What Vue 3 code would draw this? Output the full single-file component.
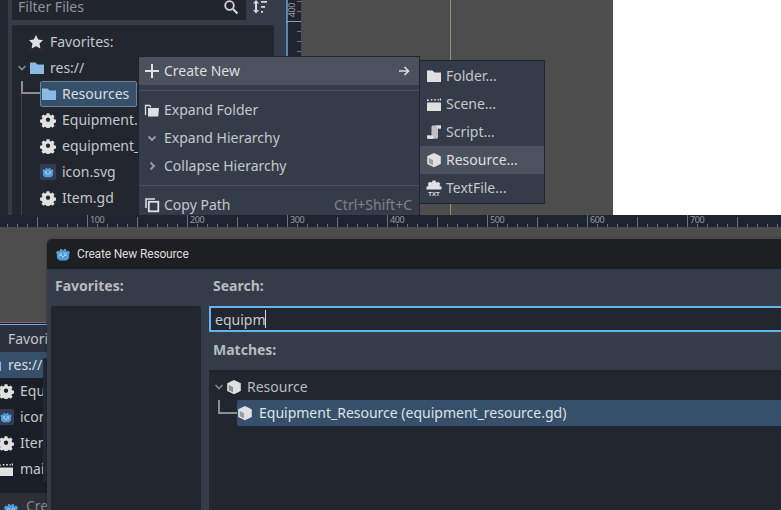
<script setup>
const ticks = []
for (let x = 7; x < 781; x += 10) {
  const step = Math.round((x - 87) / 10)
  const kind = step % 10 === 0 ? 'major' : step % 5 === 0 ? 'mid' : 'minor'
  ticks.push({ x, kind, label: step % 10 === 0 && x >= 87 && x < 760 ? String(x - 87 + 100) : '' })
}

const sideTicks = [1, 11, 31, 41, 51]

const tree = [
  { icon: 'gear', name: 'Equipment.gd' },
  { icon: 'gear', name: 'equipment_resource.gd' },
  { icon: 'godot', name: 'icon.svg' },
  { icon: 'gear', name: 'Item.gd' },
]

const backTree = [
  { icon: 'gear', name: 'Equipment.gd' },
  { icon: 'godot', name: 'icon.svg' },
  { icon: 'gear', name: 'Item.gd' },
  { icon: 'clap', name: 'main.tscn' },
]

const submenu = [
  { icon: 'folder', label: 'Folder...' },
  { icon: 'clap', label: 'Scene...' },
  { icon: 'scroll', label: 'Script...' },
  { icon: 'cube', label: 'Resource...', active: true },
  { icon: 'textfile', label: 'TextFile...' },
]
</script>

<template>
  <div class="page">
    <svg width="0" height="0" class="defs">
      <defs>
        <symbol id="folder" viewBox="0 0 16 16"><path d="M1 2.500h5.500L8.500 4.500H15v9.500H1z" fill="currentColor" /></symbol>
        <symbol id="gear" viewBox="0 0 16 16">
          <path fill="currentColor" fill-rule="evenodd" d="M6.500 1h3l.4 2 1.300.6 1.700-1.100 2.100 2.100-1.100 1.700.6 1.300 2 .4v3l-2 .4-.6 1.300 1.100 1.700-2.100 2.100-1.700-1.100-1.300.6-.4 2h-3l-.4-2-1.300-.6-1.700 1.100-2.100-2.100 1.100-1.700-.6-1.300-2-.4v-3l2-.4.6-1.300-1.100-1.700 2.100-2.100 1.700 1.100 1.300-.6zM8 5.700a2.300 2.300 0 1 0 0 4.600 2.300 2.300 0 0 0 0-4.600z" transform="translate(.5 .2) scale(.94)" />
        </symbol>
        <symbol id="head" viewBox="0 0 16 16">
          <path fill="#4f9ed8" d="M1 6.500 2.800 4.500l1.700.9L5.300 3h1.500l.6 1.200h1.200L9.200 3h1.500l.8 2.400 1.700-.9L15 6.500l-.9 1.700v4L11.500 14.500h-7L1.900 12.200V8.200z" />
          <path fill="#e6eef5" d="M4.500 7.500h2.200v2.200H4.500zM9.300 7.500h2.200v2.200H9.300zM7.300 10.300h1.400v1.300H7.300z" />
          <path fill="#25303f" d="M5.300 8.200h.9v.9h-.9zM9.900 8.200h.9v.9h-.9z" />
        </symbol>
        <symbol id="godot" viewBox="0 0 16 16">
          <rect width="16" height="16" rx="2" fill="#333c56" />
          <use href="#head" x="1.500" y="1.500" width="13" height="13" />
        </symbol>
        <symbol id="cube" viewBox="0 0 16 16">
          <path fill="currentColor" fill-rule="evenodd" d="M8 1 14.800 4.200v7.800L8 15.200 1.200 12V4.200zM2.900 6.300v4.700l4 1.900V8.200z" />
          <path fill="currentColor" opacity=".55" d="M2.900 6.300v4.700l4 1.900V8.200z" />
        </symbol>
        <symbol id="clap" viewBox="0 0 16 16">
          <path fill="currentColor" d="M1 6.500h14V15H1zM1 3.500h1.800v1.500H1zM4.800 3h1.600v1.500H4.800zM8.200 3h1.600v1.500H8.200zM11.600 3h1.200v1.500h-1.200zM13.800 2.500H15v2h-1.200z" />
        </symbol>
        <symbol id="scroll" viewBox="0 0 16 16">
          <path fill="currentColor" opacity=".8" d="M6.800 1.500H15v3h-3V13c0 1-.7 1.800-1.700 1.800H2.500C1.500 14.800 1 14 1 13v-1.500h4.500V3c0-1 .5-1.500 1.300-1.500z" />
          <path fill="currentColor" d="M8.800 1.500H15v3h-3.500V4c0-1-1-2.500-2.700-2.500zM1 11.500h6.500V13c0 1-.5 1.800-1.500 1.800H2.500C1.500 14.800 1 14 1 13z" />
        </symbol>
        <symbol id="textfile" viewBox="0 0 16 16">
          <path fill="currentColor" d="M6.500 .5h3l.3 1.500 1.200.5 1.300-.8 2 2-.8 1.300.4 1.200 1.600.3v3H.5V6.500l1.600-.3.4-1.200-.8-1.300 2-2 1.300.8 1.200-.5z" />
          <text x="8" y="15.500" text-anchor="middle" font-size="6" font-weight="700" font-family="Liberation Sans, sans-serif" fill="currentColor">TXT</text>
        </symbol>
      </defs>
    </svg>

    <div class="editor-top">
      <div class="edge"></div>
      <div class="dock">
        <div class="filter-row">
          <div class="filter-input">
            <span>Filter Files</span>
            <svg class="search" viewBox="0 0 16 16"><circle cx="6.500" cy="6.500" r="4.300" fill="none" stroke="currentColor" stroke-width="1.800" /><path d="m10 10 4.500 4.500" stroke="currentColor" stroke-width="2.200" /></svg>
          </div>
          <svg class="sort" viewBox="0 0 16 16"><path d="M4 1 1 4.500h2V11H1l3 3.500L7 11H5V4.500h2z" fill="currentColor" /><path d="M9 2h6v1.800H9zM9 7h4v1.800H9zM9 12h2v1.800H9z" fill="currentColor" /></svg>
        </div>
        <div class="file-tree">
          <div class="tree-row fav"><svg class="ico star" viewBox="0 0 16 16"><path d="m8 1 2.200 4.500 4.800.7-3.500 3.400.9 4.900L8 12.200l-4.400 2.300.9-4.900L1 6.200l4.800-.7z" fill="currentColor" /></svg>Favorites:</div>
          <div class="tree-row res">
            <svg class="chev" viewBox="0 0 10 10"><path d="m1.500 3 3.500 3.500L8.500 3" fill="none" stroke="currentColor" stroke-width="1.600" /></svg>
            <svg class="ico blue"><use href="#folder" /></svg>res://
          </div>
          <div class="tree-row child selected">
            <svg class="ico blue"><use href="#folder" /></svg>Resources
          </div>
          <div v-for="f in tree" :key="f.name" class="tree-row child">
            <svg class="ico"><use :href="'#' + f.icon" /></svg>{{ f.name }}
          </div>
          <i class="guide-v"></i>
          <i class="guide-h"></i>
        </div>
      </div>
      <div class="vruler">
        <span class="vlabel">400</span>
        <i class="vtick major"></i>
        <i v-for="y in sideTicks" :key="y" class="vtick" :style="{ top: y + 'px' }"></i>
      </div>
      <div class="viewport"><i class="axis"></i></div>
      <div class="white"></div>
    </div>

    <div class="hruler">
      <template v-for="t in ticks" :key="t.x">
        <i class="tick" :class="t.kind" :style="{ left: t.x + 'px' }"></i>
        <span v-if="t.label" class="tick-label" :style="{ left: t.x + 3 + 'px' }">{{ t.label }}</span>
      </template>
    </div>

    <div class="editor-bottom">
      <div class="back-dock">
        <div class="back-fav">Favorites:</div>
        <div class="back-res"><svg class="ico blue"><use href="#folder" /></svg>res://</div>
        <div v-for="f in backTree" :key="f.name" class="back-row">
          <svg class="ico"><use :href="'#' + f.icon" /></svg><span>{{ f.name }}</span>
        </div>
        <div class="back-title"><svg class="ico"><use href="#head" /></svg>Create</div>
        <i class="back-strip"></i>
      </div>
    </div>

    <div class="menu">
      <div class="menu-item hot">
        <svg class="ico"><path d="M8 1v14M1 8h14" stroke="currentColor" stroke-width="2" /></svg>Create New
        <svg class="arrow" viewBox="0 0 12 12"><path d="M1 6h9M6.500 2 10.500 6l-4 4" fill="none" stroke="currentColor" stroke-width="1.700" /></svg>
      </div>
      <div class="sep"></div>
      <div class="menu-item"><svg class="ico" viewBox="0 0 16 16"><path d="M1.500 13V3.500h4L7 5" fill="none" stroke="currentColor" stroke-width="1.300" /><path d="M4 6h11l-.8 8.500H4z" fill="currentColor" /></svg>Expand Folder</div>
      <div class="menu-item"><svg class="ico dim" viewBox="0 0 16 16"><path d="m4.500 6.500 3.500 3.500 3.500-3.500" fill="none" stroke="currentColor" stroke-width="1.800" /></svg>Expand Hierarchy</div>
      <div class="menu-item"><svg class="ico dim" viewBox="0 0 16 16"><path d="m6.500 4.500 3.500 3.500-3.500 3.500" fill="none" stroke="currentColor" stroke-width="1.800" /></svg>Collapse Hierarchy</div>
      <div class="sep"></div>
      <div class="menu-item"><svg class="ico" viewBox="0 0 16 16"><path d="M2 11V2h9" fill="none" stroke="currentColor" stroke-width="1.500" /><rect x="4.800" y="4.800" width="9.500" height="9.500" fill="none" stroke="currentColor" stroke-width="1.800" /></svg>Copy Path<span class="shortcut">Ctrl+Shift+C</span></div>
    </div>

    <div class="submenu">
      <div v-for="s in submenu" :key="s.label" class="menu-item" :class="{ hot: s.active }">
        <svg class="ico"><use :href="'#' + s.icon" /></svg>{{ s.label }}
      </div>
    </div>

    <div class="dialog">
      <div class="titlebar"><svg class="ico"><use href="#head" /></svg>Create New Resource</div>
      <div class="dialog-body">
        <div class="col-fav">
          <div class="label">Favorites:</div>
          <div class="fav-list"></div>
        </div>
        <div class="col-main">
          <div class="label">Search:</div>
          <div class="search-input">equipm<i class="caret"></i></div>
          <div class="label matches">Matches:</div>
          <div class="match-tree">
            <div class="match-row">
              <svg class="chev" viewBox="0 0 10 10"><path d="m1.500 3 3.500 3.500L8.500 3" fill="none" stroke="currentColor" stroke-width="1.600" /></svg>
              <svg class="ico"><use href="#cube" /></svg>Resource
            </div>
            <div class="match-row picked"><svg class="ico"><use href="#cube" /></svg>Equipment_Resource (equipment_resource.gd)</div>
            <i class="match-guide"></i>
          </div>
        </div>
      </div>
    </div>
  </div>
</template>

<style>
html, body { margin: 0; background: #4d4d4d; }
</style>

<style scoped>
.page {
  position: relative;
  width: 781px;
  height: 510px;
  overflow: hidden;
  display: flex;
  flex-direction: column;
  font-family: "Noto Sans", sans-serif;
  font-size: 14px;
  color: #c4c7cb;
}
.defs { position: absolute; }
.ico { width: 16px; height: 16px; flex: none; color: #e0e0e0; }
.blue { color: #8ab9e3; }
.dim { color: #9b9ea3; }

.editor-top { height: 215px; display: flex; flex: none; background: #353c49; }
.edge { width: 8px; flex: none; background: #21262f; }
.dock { width: 278px; flex: none; padding: 0 12px 0 4px; box-sizing: border-box; display: flex; flex-direction: column; gap: 5px; }
.filter-row { height: 20px; display: flex; align-items: center; }
.filter-input {
  width: 234px;
  height: 20px;
  background: #20252e;
  padding: 0 7px 0 6px;
  box-sizing: border-box;
  display: flex;
  align-items: flex-end;
  justify-content: space-between;
  color: #8f939a;
  line-height: 20px;
}
.filter-input span { transform: translateY(-3px); }
.search { width: 16px; height: 16px; color: #d4d5d7; margin-bottom: 5px; }
.sort { width: 16px; height: 16px; margin-left: 6px; color: #d8d9db; margin-bottom: 6px; }
.file-tree { position: relative; flex: 1; background: #21262f; width: 262px; padding-top: 4px; border-radius: 2px 2px 0 0; }
.tree-row { height: 26px; display: flex; align-items: center; gap: 6px; padding-bottom: 1px; box-sizing: border-box; }
.fav { padding-left: 16px; }
.res { padding-left: 5px; gap: 2px; }
.res .ico { margin-right: 3px; margin-left: 0; }
.chev { width: 10px; height: 10px; color: #848890; flex: none; }
.child { padding-left: 28px; }
.selected {
  background: #36506b;
  border: 1px solid #6f8196;
  border-radius: 2px;
  margin-left: 28px;
  padding-left: 0;
  gap: 5px;
  width: 97px;
  color: #d9dce0;
}
.guide-v { position: absolute; left: 9px; top: 56px; width: 1px; bottom: 0; background: #3c414a; }
.guide-h { position: absolute; left: 9px; top: 56px; width: 19px; height: 13px; border: solid #8b8e93; border-width: 0 0 2px 2px; box-sizing: border-box; }

.vruler { width: 15px; flex: none; background: #1f2530; position: relative; }
.vruler::before { content: ""; position: absolute; left: 0; top: 0; bottom: 0; width: 2px; background: #5a83ad; }
.vlabel { position: absolute; left: -1px; top: 5px; font-size: 9px; line-height: 10px; letter-spacing: -.4px; color: #9a9da2; transform: rotate(-90deg); }
.vtick { position: absolute; right: 0; width: 4px; height: 1px; background: #6d7179; }
.vtick.major { left: 0; top: 21px; width: 15px; background: #9a9da2; }
.viewport { flex: 1; background: #4d4d4d; position: relative; }
.axis { position: absolute; left: 149px; top: 0; bottom: 0; width: 1px; background: #7a9b6d; }
.white { width: 168px; flex: none; background: #fff; }

.hruler { height: 12px; flex: none; position: relative; background: #1f2530; }
.tick { position: absolute; bottom: 0; width: 1px; height: 3px; background: #6d7179; }
.tick.mid { height: 10px; }
.tick.major { height: 12px; }
.tick-label { position: absolute; top: 0; font-size: 9px; line-height: 10px; letter-spacing: -.4px; color: #989ba1; }

.editor-bottom { flex: 1; background: #4d4d4d; position: relative; }
.back-dock {
  position: absolute;
  left: 0;
  top: 95px;
  width: 47px;
  bottom: 0;
  background: #1a1f27;
  border-top: 1px solid #8a5f8c;
  overflow: hidden;
  white-space: nowrap;
}
.back-fav { height: 28px; margin-top: 1px; padding-left: 8px; line-height: 27px; box-sizing: border-box; background: #2c323d; border-top: 1px solid #6ea6d8; }
.back-res { height: 26px; display: flex; align-items: center; gap: 6px; margin-left: -14px; padding-bottom: 1px; box-sizing: border-box; background: #36506b; color: #d9dce0; }
.back-row { height: 26px; display: flex; align-items: center; gap: 6px; margin-left: -2px; padding-bottom: 1px; box-sizing: border-box; }
.back-title { height: 22px; margin-top: 11px; display: flex; align-items: flex-start; gap: 7px; padding: 3px 0 0 3px; line-height: 20px; box-sizing: border-box; background: #2c2f33; color: #858990; }
.back-title .ico { margin-top: 5px; }
.back-strip { position: absolute; right: 0; top: 35px; width: 4px; height: 124px; background: #232832; }

.menu {
  position: absolute;
  left: 138px;
  top: 56px;
  width: 282px;
  height: 159px;
  background: #353c49;
  border: 1px solid #1f2530;
  border-bottom: 0;
  box-sizing: border-box;
  overflow: hidden;
}
.menu-item { height: 28px; display: flex; align-items: center; gap: 4px; padding: 0 0 1px 5px; box-sizing: border-box; position: relative; }
.menu-item.hot { background: #4b525e; color: #dcdee0; }
.sep { height: 1px; margin: 5px 0; background: #4b525e; }
.arrow { width: 12px; height: 12px; margin-left: auto; margin-right: 9px; color: #d8d9db; }
.shortcut { margin-left: auto; margin-right: 7px; color: #7e838b; }

.submenu {
  position: absolute;
  left: 419px;
  top: 60px;
  width: 126px;
  height: 144px;
  background: #353c49;
  border: 1px solid #1f2530;
  box-sizing: border-box;
  padding-top: 1px;
}
.submenu .menu-item { padding-left: 6px; }

.dialog {
  position: absolute;
  left: 47px;
  top: 238px;
  right: -20px;
  bottom: -20px;
  border-radius: 6px 0 0 0;
  background: #353c49;
  display: flex;
  flex-direction: column;
  box-shadow: 0 0 3px rgba(0, 0, 0, .35);
}
.titlebar {
  height: 31px;
  flex: none;
  background: #1e1f20;
  border-top: 1px solid #4a4a4a;
  box-sizing: border-box;
  border-radius: 6px 0 0 0;
  color: #dcdcdc;
  font-family: Roboto, sans-serif;
  font-size: 12px;
  letter-spacing: -.17px;
  display: flex;
  align-items: center;
  gap: 6px;
  padding-left: 8px;
}
.dialog-body { flex: 1; display: flex; }
.col-fav { width: 154px; flex: none; padding-left: 4px; box-sizing: border-box; display: flex; flex-direction: column; }
.fav-list { flex: 1; background: #21262f; width: 150px; border-radius: 2px; margin-top: 7px; }
.label { font-weight: 700; color: #b8bbbf; height: 30px; line-height: 34px; padding-left: 4px; flex: none; }
.col-main { flex: 1; padding-left: 8px; display: flex; flex-direction: column; }
.search-input {
  height: 26px;
  flex: none;
  margin-top: 7px;
  background: #21262f;
  border: 2px solid #66b3f2;
  border-right: 0;
  box-sizing: border-box;
  padding-left: 4px;
  line-height: 21px;
  display: flex;
  align-items: center;
  color: #c8cbce;
}
.caret { width: 1px; height: 18px; background: #dfe0e2; }
.matches { height: 30px; margin-top: 3px; line-height: 30px; }
.match-tree { flex: 1; position: relative; background: #21262f; margin-top: 5px; padding-top: 4px; }
.match-row { height: 26px; display: flex; align-items: center; gap: 5px; padding: 0 0 1px 5px; box-sizing: border-box; color: #b8bbbf; }
.match-row .chev { margin-right: -3px; }
.picked { margin-left: 28px; padding-left: 0; gap: 6px; background: #36506b; color: #dfe1e3; border-radius: 2px 0 0 2px; }
.match-guide { position: absolute; left: 9px; top: 30px; width: 19px; height: 14px; border: solid #8b8e93; border-width: 0 0 2px 2px; box-sizing: border-box; }
</style>
